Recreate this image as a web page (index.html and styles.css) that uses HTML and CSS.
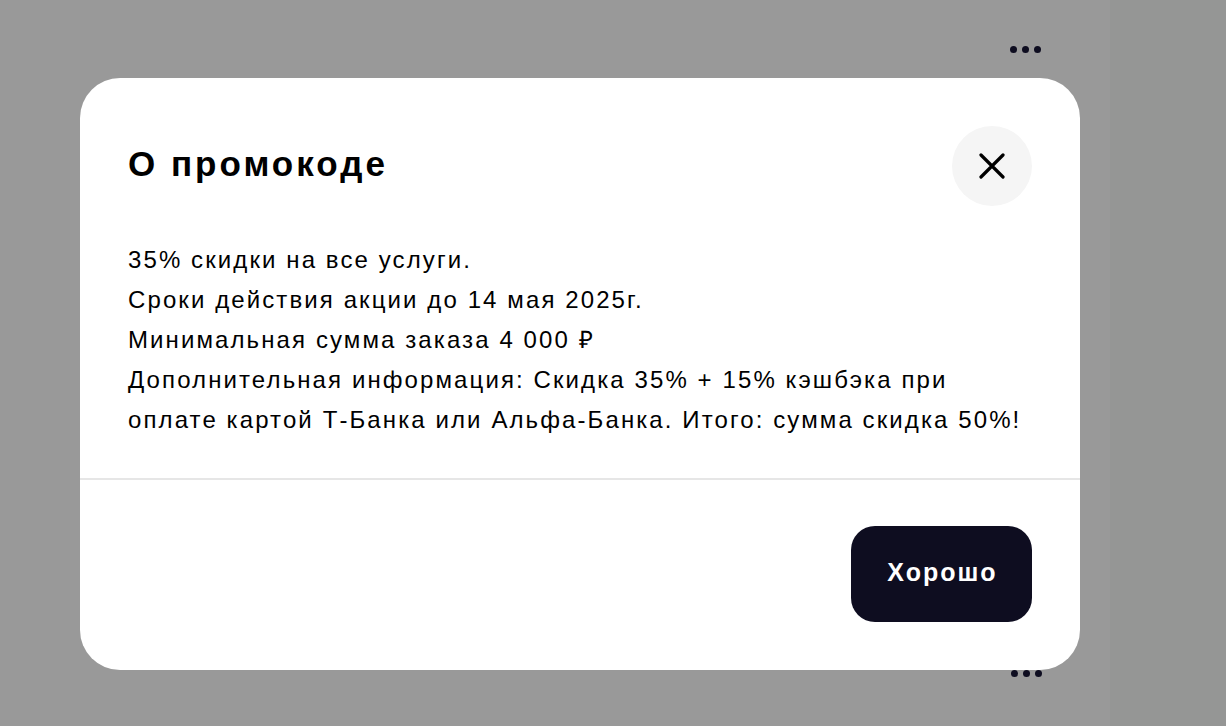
FILE: index.html
```html
<!DOCTYPE html>
<html lang="ru">
<head>
<meta charset="utf-8">
<link rel="stylesheet" href="styles.css">
</head>
<body>
<div class="page">
  <div class="dots dots-top"><span></span><span></span><span></span></div>
  <div class="dots dots-bottom"><span></span><span></span><span></span></div>
  <div class="side"></div>
  <div class="modal">
    <div class="modal-head">
      <h2 class="title">О промокоде</h2>
      <button class="close" aria-label="Закрыть">
        <svg width="26" height="26" viewBox="0 0 26 26"><path d="M2 2L24 24M24 2L2 24" stroke="#000" stroke-width="3.2" stroke-linecap="round" fill="none"/></svg>
      </button>
    </div>
    <div class="modal-body">
      <p>35% скидки на все услуги.</p>
      <p>Сроки действия акции до 14 мая 2025г.</p>
      <p>Минимальная сумма заказа 4 000 ₽</p>
      <p>Дополнительная информация: Скидка 35% + 15% кэшбэка при оплате картой Т-Банка или Альфа-Банка. Итого: сумма скидка 50%!</p>
    </div>
    <div class="modal-foot">
      <button class="ok">Хорошо</button>
    </div>
  </div>
</div>
</body>
</html>
```
FILE: styles.css
```css
* { box-sizing: border-box; }
html, body { margin: 0; padding: 0; }
body {
  width: 1226px;
  height: 726px;
  overflow: hidden;
  background: #999999;
  font-family: "Liberation Sans", Arial, sans-serif;
}
.page {
  position: relative;
  width: 1226px;
  height: 726px;
  padding: 78px 146px 0 80px;
}
.side {
  position: absolute;
  left: 1110px;
  top: 0;
  width: 116px;
  height: 726px;
  background: #959695;
}
.dots {
  position: absolute;
  display: flex;
  gap: 5px;
}
.dots span {
  width: 7px;
  height: 7px;
  border-radius: 50%;
  background: #0e0d20;
}
.dots-top { left: 1010px; top: 46px; }
.dots-bottom { left: 1011px; top: 670px; }
.modal {
  position: relative;
  width: 1000px;
  height: 592px;
  background: #ffffff;
  border-radius: 40px;
  display: flex;
  flex-direction: column;
}
.modal-head {
  display: flex;
  justify-content: space-between;
  align-items: flex-start;
  padding: 48px 48px 0 48px;
}
.title {
  margin: 0;
  padding-top: 17px;
  font-size: 35px;
  line-height: 42px;
  letter-spacing: 3px;
  font-weight: 700;
  color: #000;
}
.close {
  width: 80px;
  height: 80px;
  border: none;
  border-radius: 50%;
  background: #f5f5f5;
  display: flex;
  align-items: center;
  justify-content: center;
  padding: 0;
}
.modal-body {
  padding: 34px 48px 0 48px;
  height: 274px;
  border-bottom: 2px solid #e6e6e6;
}
.modal-body p {
  margin: 0;
  font-size: 24px;
  line-height: 40px;
  letter-spacing: 2.1px;
  color: #000;
}
.modal-foot {
  display: flex;
  justify-content: flex-end;
  padding: 46px 48px 0 48px;
}
.ok {
  width: 181px;
  height: 96px;
  border: none;
  border-radius: 24px;
  background: #0e0d20;
  color: #fff;
  font-family: "Liberation Sans", Arial, sans-serif;
  font-size: 25px;
  letter-spacing: 2px;
  font-weight: 700;
  padding: 0 0 3px 2px;
}
```
